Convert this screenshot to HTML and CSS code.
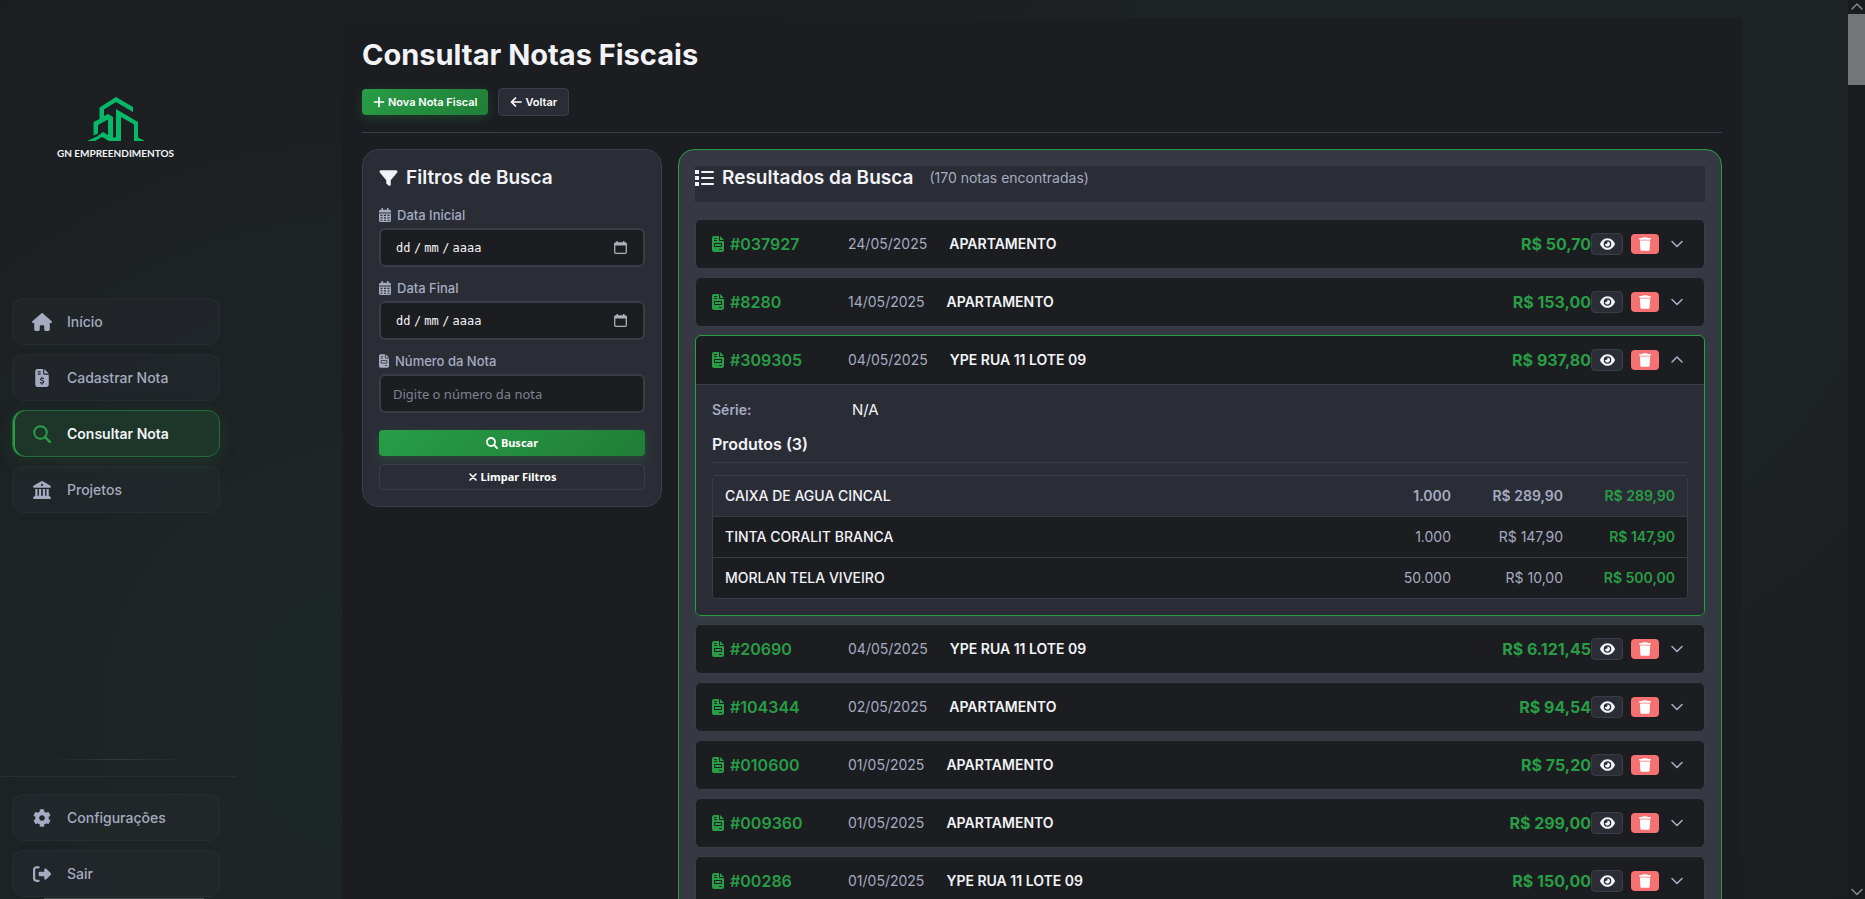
FILE: index.html
```html
<!DOCTYPE html>
<html lang="pt-BR">
<head>
<meta charset="utf-8">
<title>Consultar Notas Fiscais</title>
<link rel="stylesheet" href="styles.css">
</head>
<body>
<svg class="sprite" aria-hidden="true">
  <symbol id="house" viewBox="0 0 576 512"><path d="M575.8 255.5c0 18-15 32.1-32 32.1h-32l.7 160.2c0 2.7-.2 5.4-.5 8.1V472c0 22.1-17.9 40-40 40H456c-1.1 0-2.2 0-3.3-.1c-1.4 .1-2.8 .1-4.2 .1H416 392c-22.1 0-40-17.9-40-40V448 384c0-17.7-14.3-32-32-32H256c-17.7 0-32 14.3-32 32v64 24c0 22.1-17.9 40-40 40H160 128.1c-1.5 0-3-.1-4.5-.2c-1.2 .1-2.4 .2-3.6 .2H104c-22.1 0-40-17.9-40-40V360c0-.9 0-1.9 .1-2.8V287.6H32c-18 0-32-14-32-32.1c0-9 3-17 10-24L266.4 8c7-7 15-8 22-8s15 2 21 7L564.8 231.5c8 7 12 15 11 24z"/></symbol>
  <symbol id="file-dollar" viewBox="0 0 384 512"><path fill-rule="evenodd" d="M64 0C28.700 0 0 28.700 0 64V448c0 35.300 28.700 64 64 64H320c35.300 0 64-28.700 64-64V160H256c-17.700 0-32-14.300-32-32V0H64zM256 0V128H384L256 0zM80 64h64c8.800 0 16 7.200 16 16s-7.200 16-16 16H80c-8.800 0-16-7.200-16-16s7.200-16 16-16zm0 64h64c8.800 0 16 7.200 16 16s-7.200 16-16 16H80c-8.800 0-16-7.200-16-16s7.200-16 16-16z"/><path d="M238 274c-14-9-88-24-88 20 0 46 92 22 92 70 0 46-74 36-98 20M192 232v32M192 398v34" fill="none" stroke="#1e2327" stroke-width="32" stroke-linecap="round"/></symbol>
  <symbol id="lens" viewBox="0 0 18 18"><circle cx="7.500" cy="7.500" r="6.300" fill="none" stroke="currentColor" stroke-width="2"/><path d="M12 12l4.800 4.800" stroke="currentColor" stroke-width="2.400" stroke-linecap="round"/></symbol>
  <symbol id="landmark" viewBox="0 0 512 512"><path fill-rule="evenodd" d="M240.100 4.200c9.800-5.600 21.900-5.600 31.800 0l171.800 98.100L448 104l0 .9 47.900 27.400c12.600 7.200 18.800 22 15.100 36s-16.400 23.800-30.900 23.800H32c-14.500 0-27.200-9.800-30.900-23.800s2.500-28.800 15.100-36L64 104.900V104l4.400-1.600L240.100 4.200zM256 80a32 32 0 1 0 0 64 32 32 0 1 0 0-64zM64 224h64V416h40V224h64V416h48V224h64V416h40V224h64V420c.6 .3 1.200 .7 1.800 1.100l48 32c11.700 7.800 17 22.400 12.900 35.900S494.100 512 480 512H32c-14.100 0-26.500-9.200-30.600-22.700s1.100-28.100 12.900-35.900l48-32c.6-.4 1.200-.7 1.700-1.100V224z"/></symbol>
  <symbol id="gear" viewBox="0 0 512 512"><path d="M487.4 315.7l-42.6-24.6c4.3-23.2 4.3-47 0-70.2l42.6-24.6c4.9-2.8 7.1-8.6 5.5-14-11.1-35.6-30-67.8-54.7-94.6-3.8-4.1-10-5.1-14.8-2.3L380.8 110c-17.9-15.4-38.5-27.3-60.8-35.1V25.8c0-5.6-3.9-10.5-9.4-11.7-36.7-8.2-74.3-7.8-109.2 0-5.5 1.2-9.4 6.1-9.4 11.7V75c-22.2 7.9-42.8 19.8-60.8 35.1L88.7 85.5c-4.9-2.8-11-1.9-14.8 2.3-24.7 26.7-43.6 58.9-54.7 94.6-1.7 5.4.6 11.2 5.5 14L67.3 221c-4.3 23.2-4.3 47 0 70.2l-42.6 24.6c-4.9 2.8-7.1 8.6-5.5 14 11.1 35.6 30 67.8 54.7 94.6 3.8 4.1 10 5.1 14.8 2.3l42.6-24.6c17.9 15.4 38.5 27.3 60.8 35.1v49.2c0 5.6 3.9 10.5 9.4 11.7 36.7 8.2 74.3 7.8 109.2 0 5.5-1.2 9.4-6.1 9.4-11.7v-49.2c22.2-7.9 42.8-19.8 60.8-35.1l42.6 24.6c4.9 2.8 11 1.900 14.8-2.3 24.7-26.700 43.6-58.9 54.7-94.6 1.5-5.5-.7-11.3-5.6-14.1zM256 336c-44.1 0-80-35.9-80-80s35.9-80 80-80 80 35.9 80 80-35.9 80-80 80z"/></symbol>
  <symbol id="exit" viewBox="0 0 512 512"><path d="M377.900 105.900L500.700 228.700c7.200 7.200 11.300 17.100 11.300 27.300s-4.100 20.100-11.300 27.300L377.900 406.100c-6.400 6.400-15 9.900-24 9.900c-18.700 0-33.900-15.200-33.900-33.900l0-62.100-128 0c-17.700 0-32-14.300-32-32l0-64c0-17.700 14.300-32 32-32l128 0 0-62.100c0-18.700 15.200-33.900 33.900-33.900c9 0 17.600 3.600 24 9.900zM160 96L96 96c-17.700 0-32 14.300-32 32l0 256c0 17.700 14.300 32 32 32l64 0c17.700 0 32 14.300 32 32s-14.300 32-32 32l-64 0c-53 0-96-43-96-96L0 128C0 75 43 32 96 32l64 0c17.700 0 32 14.300 32 32s-14.300 32-32 32z"/></symbol>
  <symbol id="plus" viewBox="0 0 12 12"><path d="M6 1.500v9M1.500 6h9" stroke="currentColor" stroke-width="1.700" stroke-linecap="round"/></symbol>
  <symbol id="arrow" viewBox="0 0 12 12"><path d="M5.500 2L1.500 6l4 4M1.500 6h9.500" fill="none" stroke="currentColor" stroke-width="1.700" stroke-linecap="round" stroke-linejoin="round"/></symbol>
  <symbol id="cross" viewBox="0 0 10 10"><path d="M2 2l6 6M8 2l-6 6" stroke="currentColor" stroke-width="1.600" stroke-linecap="round"/></symbol>
  <symbol id="search" viewBox="0 0 12 12"><circle cx="5" cy="5" r="4" fill="none" stroke="currentColor" stroke-width="1.800"/><path d="M8 8l3.100 3.100" stroke="currentColor" stroke-width="2" stroke-linecap="round"/></symbol>
  <symbol id="funnel" viewBox="0 0 512 512"><path d="M3.9 54.9C10.5 40.9 24.5 32 40 32H472c15.5 0 29.5 8.900 36.1 22.9s4.6 30.5-5.2 42.5L320 320.9V448c0 12.1-6.8 23.2-17.7 28.6s-23.8 4.3-33.5-3l-64-48c-8.1-6-12.8-15.5-12.8-25.6V320.9L9 97.3C-.7 85.4-2.8 68.8 3.9 54.9z"/></symbol>
  <symbol id="list" viewBox="0 0 19 16"><path d="M0 0h4v4H0zM0 6h4v4H0zM0 12h4v4H0z"/><path d="M7 2h11M7 8h11M7 14h11" stroke="currentColor" stroke-width="2" stroke-linecap="round"/></symbol>
  <symbol id="calendar" viewBox="0 0 12 14"><path fill-rule="evenodd" d="M2.500 0h1.500v1.700h4V0h1.500v1.700h1A1.500 1.500 0 0 1 12 3.200V4.500H0V3.200A1.500 1.500 0 0 1 1.500 1.700h1zM0 5.400h12v7.100A1.500 1.500 0 0 1 10.500 14h-9A1.500 1.500 0 0 1 0 12.500zM1.500 6.700v1.300h2V6.700zm3.500 0v1.300h2V6.700zm3.500 0v1.300h2V6.700zM1.500 9.200v1.300h2V9.200zm3.500 0v1.300h2V9.200zm3.500 0v1.300h2V9.200zM1.500 11.700v1h2v-1zm3.500 0v1h2v-1zm3.500 0v1h2v-1z"/></symbol>
  <symbol id="picker" viewBox="0 0 13 13"><path fill="none" stroke="currentColor" stroke-width="1.300" d="M1.700 2h9.600q1 0 1 1v8.300q0 1-1 1H1.700q-1 0-1-1V3q0-1 1-1z"/><path d="M.7 2h11.600v2.500H.7zM2.500 0H4v2H2.500zM9 0h1.500v2H9z"/></symbol>
  <symbol id="invoice" viewBox="0 0 384 512"><path fill-rule="evenodd" d="M64 0C28.700 0 0 28.700 0 64V448c0 35.300 28.700 64 64 64H320c35.300 0 64-28.700 64-64V160H256c-17.700 0-32-14.300-32-32V0H64zM256 0V128H384L256 0zM80 64h64c8.800 0 16 7.200 16 16s-7.200 16-16 16H80c-8.800 0-16-7.200-16-16s7.200-16 16-16zm0 64h64c8.800 0 16 7.200 16 16s-7.200 16-16 16H80c-8.800 0-16-7.200-16-16s7.200-16 16-16zm16 96H288c17.700 0 32 14.300 32 32v64c0 17.700-14.300 32-32 32H96c-17.700 0-32-14.300-32-32V256c0-17.700 14.300-32 32-32zm0 32v64H288V256H96zM240 416h64c8.800 0 16 7.200 16 16s-7.200 16-16 16H240c-8.800 0-16-7.200-16-16s7.200-16 16-16z"/></symbol>
  <symbol id="eye" viewBox="0 0 576 512"><path d="M288 32c-80.800 0-145.500 36.800-192.600 80.600C48.600 156 17.300 208 2.500 243.700c-3.300 7.900-3.300 16.700 0 24.600C17.300 304 48.600 356 95.400 399.400C142.500 443.200 207.200 480 288 480s145.500-36.800 192.600-80.600c46.800-43.500 78.100-95.400 93-131.100c3.300-7.900 3.300-16.700 0-24.600c-14.900-35.700-46.200-87.700-93-131.100C433.500 68.800 368.800 32 288 32zM144 256a144 144 0 1 1 288 0 144 144 0 1 1 -288 0zm144-64c0 35.300-28.700 64-64 64c-7.100 0-13.900-1.200-20.300-3.300c-5.500-1.800-11.900 1.600-11.700 7.400c.3 6.900 1.300 13.800 3.200 20.700c13.700 51.200 66.400 81.600 117.600 67.900s81.600-66.400 67.900-117.600c-11.100-41.500-47.800-69.400-88.600-71.100c-5.800-.2-9.200 6.100-7.400 11.700c2.100 6.400 3.300 13.200 3.300 20.300z"/></symbol>
  <symbol id="trash" viewBox="0 0 448 512"><path d="M135.200 17.700L128 32H32C14.300 32 0 46.300 0 64S14.300 96 32 96H416c17.700 0 32-14.300 32-32s-14.300-32-32-32H320l-7.200-14.300C307.400 6.800 296.300 0 284.200 0H163.800c-12.100 0-23.200 6.800-28.600 17.700zM416 128H32L53.200 467c1.600 25.300 22.600 45 47.900 45H346.900c25.300 0 46.300-19.700 47.900-45L416 128z"/></symbol>
  <symbol id="down" viewBox="0 0 14 14"><path d="M2 4.500l5 5 5-5" fill="none" stroke="currentColor" stroke-width="1.600" stroke-linecap="round" stroke-linejoin="round"/></symbol>
  <symbol id="up" viewBox="0 0 14 14"><path d="M2 9l5-5 5 5" fill="none" stroke="currentColor" stroke-width="1.600" stroke-linecap="round" stroke-linejoin="round"/></symbol>
</svg>

<div class="app">
  <aside class="sidebar">
    <div class="brand">
      <svg class="brand-mark" viewBox="0 0 58 44" aria-hidden="true"><path d="M12.500 22V10.500L29 0l17 10v5L29 5 17 12.500V19l4-2 5 3v20.500h3V12l22 13v15.500l7 3.500H47V27.500L34 20v24H22l-7-4-7 4H0l10-4.500 6-4.500 5 3V22.500L11 28v8.500l-4.500 2V25z"/></svg>
      <span class="brand-name">GN EMPREENDIMENTOS</span>
    </div>
    <nav class="menu">
      <a class="item" href="#"><svg class="item-icon"><use href="#house"/></svg>Início</a>
      <a class="item" href="#"><svg class="item-icon"><use href="#file-dollar"/></svg>Cadastrar Nota</a>
      <a class="item active" href="#"><svg class="item-icon"><use href="#lens"/></svg>Consultar Nota</a>
      <a class="item" href="#"><svg class="item-icon"><use href="#landmark"/></svg>Projetos</a>
    </nav>
    <div class="fade-line"></div>
    <nav class="menu bottom">
      <a class="item" href="#"><svg class="item-icon"><use href="#gear"/></svg>Configurações</a>
      <a class="item" href="#"><svg class="item-icon"><use href="#exit"/></svg>Sair</a>
    </nav>
    <div class="h-thumb"></div>
  </aside>

  <div class="stage">
    <main class="panel">
      <header class="page-head">
        <h1>Consultar Notas Fiscais</h1>
        <div class="head-actions">
          <button class="btn primary" type="button"><svg class="i12"><use href="#plus"/></svg>Nova Nota Fiscal</button>
          <button class="btn outline" type="button"><svg class="i12"><use href="#arrow"/></svg>Voltar</button>
        </div>
      </header>

      <div class="columns">
        <form class="filters">
          <h2><svg class="title-icon"><use href="#funnel"/></svg>Filtros de Busca</h2>
          <div class="field">
            <label for="d1"><svg class="label-icon"><use href="#calendar"/></svg>Data Inicial</label>
            <div class="control date"><input class="part" id="d1" placeholder="dd">/<input class="part" aria-label="Mês inicial" placeholder="mm">/<input class="part year" aria-label="Ano inicial" placeholder="aaaa"><button class="pick" type="button" aria-label="Abrir calendário"><svg class="i13"><use href="#picker"/></svg></button></div>
          </div>
          <div class="field">
            <label for="d2"><svg class="label-icon"><use href="#calendar"/></svg>Data Final</label>
            <div class="control date"><input class="part" id="d2" placeholder="dd">/<input class="part" aria-label="Mês final" placeholder="mm">/<input class="part year" aria-label="Ano final" placeholder="aaaa"><button class="pick" type="button" aria-label="Abrir calendário"><svg class="i13"><use href="#picker"/></svg></button></div>
          </div>
          <div class="field">
            <label for="num"><svg class="label-icon slim"><use href="#invoice"/></svg>Número da Nota</label>
            <input class="control" id="num" type="text" placeholder="Digite o número da nota">
          </div>
          <div class="form-actions">
            <button class="btn primary" type="button"><svg class="i12"><use href="#search"/></svg>Buscar</button>
            <button class="btn outline" type="button"><svg class="i10"><use href="#cross"/></svg>Limpar Filtros</button>
          </div>
        </form>

        <section class="results">
          <div class="results-head">
            <h2><svg class="title-icon"><use href="#list"/></svg>Resultados da Busca</h2>
            <span class="count">(170 notas encontradas)</span>
          </div>
          <div class="notes">
            <article class="note"><div class="note-row"><span class="num"><svg class="note-icon"><use href="#invoice"/></svg>#037927</span><span class="day">24/05/2025</span><span class="place">APARTAMENTO</span><span class="total">R$ 50,70</span><button class="view" aria-label="Ver"><svg class="eye"><use href="#eye"/></svg></button><button class="del" aria-label="Excluir"><svg class="trash"><use href="#trash"/></svg></button><button class="toggle" aria-label="Expandir"><svg class="i14"><use href="#down"/></svg></button></div></article>
            <article class="note"><div class="note-row"><span class="num"><svg class="note-icon"><use href="#invoice"/></svg>#8280</span><span class="day">14/05/2025</span><span class="place">APARTAMENTO</span><span class="total">R$ 153,00</span><button class="view" aria-label="Ver"><svg class="eye"><use href="#eye"/></svg></button><button class="del" aria-label="Excluir"><svg class="trash"><use href="#trash"/></svg></button><button class="toggle" aria-label="Expandir"><svg class="i14"><use href="#down"/></svg></button></div></article>
            <article class="note open"><div class="note-row"><span class="num"><svg class="note-icon"><use href="#invoice"/></svg>#309305</span><span class="day">04/05/2025</span><span class="place">YPE RUA 11 LOTE 09</span><span class="total">R$ 937,80</span><button class="view" aria-label="Ver"><svg class="eye"><use href="#eye"/></svg></button><button class="del" aria-label="Excluir"><svg class="trash"><use href="#trash"/></svg></button><button class="toggle" aria-label="Recolher"><svg class="i14"><use href="#up"/></svg></button></div>
              <div class="detail">
                <div class="series"><span class="series-label">Série:</span><span>N/A</span></div>
                <h3>Produtos (3)</h3>
                <div class="table-box">
                  <table>
                    <tbody>
                      <tr class="first"><td>CAIXA DE AGUA CINCAL</td><td class="n qty">1.000</td><td class="n unit">R$ 289,90</td><td class="n sum">R$ 289,90</td></tr>
                      <tr><td>TINTA CORALIT BRANCA</td><td class="n qty">1.000</td><td class="n unit">R$ 147,90</td><td class="n sum">R$ 147,90</td></tr>
                      <tr><td>MORLAN TELA VIVEIRO</td><td class="n qty">50.000</td><td class="n unit">R$ 10,00</td><td class="n sum">R$ 500,00</td></tr>
                    </tbody>
                  </table>
                </div>
              </div>
            </article>
            <article class="note"><div class="note-row"><span class="num"><svg class="note-icon"><use href="#invoice"/></svg>#20690</span><span class="day">04/05/2025</span><span class="place">YPE RUA 11 LOTE 09</span><span class="total">R$ 6.121,45</span><button class="view" aria-label="Ver"><svg class="eye"><use href="#eye"/></svg></button><button class="del" aria-label="Excluir"><svg class="trash"><use href="#trash"/></svg></button><button class="toggle" aria-label="Expandir"><svg class="i14"><use href="#down"/></svg></button></div></article>
            <article class="note"><div class="note-row"><span class="num"><svg class="note-icon"><use href="#invoice"/></svg>#104344</span><span class="day">02/05/2025</span><span class="place">APARTAMENTO</span><span class="total">R$ 94,54</span><button class="view" aria-label="Ver"><svg class="eye"><use href="#eye"/></svg></button><button class="del" aria-label="Excluir"><svg class="trash"><use href="#trash"/></svg></button><button class="toggle" aria-label="Expandir"><svg class="i14"><use href="#down"/></svg></button></div></article>
            <article class="note"><div class="note-row"><span class="num"><svg class="note-icon"><use href="#invoice"/></svg>#010600</span><span class="day">01/05/2025</span><span class="place">APARTAMENTO</span><span class="total">R$ 75,20</span><button class="view" aria-label="Ver"><svg class="eye"><use href="#eye"/></svg></button><button class="del" aria-label="Excluir"><svg class="trash"><use href="#trash"/></svg></button><button class="toggle" aria-label="Expandir"><svg class="i14"><use href="#down"/></svg></button></div></article>
            <article class="note"><div class="note-row"><span class="num"><svg class="note-icon"><use href="#invoice"/></svg>#009360</span><span class="day">01/05/2025</span><span class="place">APARTAMENTO</span><span class="total">R$ 299,00</span><button class="view" aria-label="Ver"><svg class="eye"><use href="#eye"/></svg></button><button class="del" aria-label="Excluir"><svg class="trash"><use href="#trash"/></svg></button><button class="toggle" aria-label="Expandir"><svg class="i14"><use href="#down"/></svg></button></div></article>
            <article class="note"><div class="note-row"><span class="num"><svg class="note-icon"><use href="#invoice"/></svg>#00286</span><span class="day">01/05/2025</span><span class="place">YPE RUA 11 LOTE 09</span><span class="total">R$ 150,00</span><button class="view" aria-label="Ver"><svg class="eye"><use href="#eye"/></svg></button><button class="del" aria-label="Excluir"><svg class="trash"><use href="#trash"/></svg></button><button class="toggle" aria-label="Expandir"><svg class="i14"><use href="#down"/></svg></button></div></article>
          </div>
        </section>
      </div>
    </main>
  </div>

  <div class="scrollbar" aria-hidden="true">
    <svg class="i14"><use href="#up"/></svg>
    <div class="thumb"></div>
    <svg class="i14 last"><use href="#down"/></svg>
  </div>
</div>
</body>
</html>
```
FILE: styles.css
```css
:root {
  --bg: #1c1d21;
  --card: #2b2d36;
  --raised: #363843;
  --line: #3a3c47;
  --green: #289d46;
  --green-dark: #207e38;
  --text: #f2f3f7;
  --muted: #a5abc0;
}

* { box-sizing: border-box; }

body {
  margin: 0;
  height: 100vh;
  overflow: hidden;
  color: var(--text);
  font-family: Inter, "Liberation Sans", sans-serif;
  font-size: 14px;
  line-height: 20px;
  background:
    radial-gradient(circle at 20% 80%, rgba(40, 167, 100, 0.08), transparent 50%),
    radial-gradient(circle at 80% 20%, rgba(40, 167, 100, 0.06), transparent 50%),
    var(--bg);
}

h1, h2, h3 { margin: 0; font-weight: 600; }
svg { display: block; flex: none; fill: currentColor; }
button { font: inherit; color: inherit; cursor: pointer; padding: 0; border: 0; background: none; }
a { color: inherit; text-decoration: none; }
.sprite { position: absolute; width: 0; height: 0; }
.i10 { width: 10px; height: 10px; }
.i12 { width: 12px; height: 12px; }
.i13 { width: 13px; height: 13px; }
.i14 { width: 14px; height: 14px; }

.app { display: grid; grid-template-columns: 236px 1fr 17px; height: 100vh; }

.sidebar { display: flex; flex-direction: column; height: 100vh; }
.brand { display: flex; flex-direction: column; align-items: center; gap: 4px; padding: 97px 5px 0 0; margin-bottom: 137px; }
.brand-mark { width: 58px; height: 44px; color: #06b968; }
.brand-name { font: 700 10px/16px Lato, "Open Sans", sans-serif; }
.menu { display: flex; flex-direction: column; gap: 9px; padding: 0 16px 0 12px; }
.menu.bottom { margin-top: 16px; padding-top: 17px; border-top: 1px solid #2a2f34; }
.fade-line { height: 1px; margin: auto 48px 0; background: linear-gradient(90deg, transparent, #343a3e, transparent); }
.h-thumb { width: 160px; height: 1px; margin: 1px 0 0 44px; background: #4d5352; }
.item {
  display: flex; align-items: center; gap: 15px; height: 47px; padding: 0 19px;
  border: 1px solid rgba(255, 255, 255, 0.03); border-radius: 12px;
  background: rgba(43, 45, 54, 0.3); color: var(--muted); font-weight: 500;
}
.item-icon { width: 20px; height: 18px; }
.item.active {
  color: var(--text); font-weight: 600;
  background: rgba(40, 157, 70, 0.16);
  border-color: #236b39;
  box-shadow: inset 2px 0 0 var(--green), 0 4px 20px rgba(40, 157, 70, 0.15);
}
.item.active .item-icon { color: var(--green); }

.stage { display: flex; justify-content: center; padding-top: 18px; min-width: 0; height: 100vh; overflow: hidden; }
.panel { width: 100%; max-width: 1400px; padding: 20px; background: var(--bg); }
.page-head { padding-bottom: 16px; border-bottom: 1px solid var(--line); }
h1 { font-size: 29px; line-height: 34px; font-weight: 700; }
.head-actions { display: flex; align-items: center; gap: 10px; margin-top: 16px; }
.btn {
  display: flex; align-items: center; justify-content: center; gap: 3px;
  height: 26px; padding: 0 11px; border-radius: 4px; font-size: 11px; line-height: 16px; font-weight: 600; color: #fff;
}
.primary { background: linear-gradient(135deg, var(--green), var(--green-dark)); box-shadow: 0 4px 12px rgba(40, 157, 70, 0.25); }
.outline { height: 28px; background: var(--card); border: 1px solid var(--line); }

.columns { display: grid; grid-template-columns: 300px 1fr; align-items: start; gap: 16px; margin-top: 16px; }
h2 { display: flex; align-items: center; gap: 8px; font-size: 19px; line-height: 24px; }
.title-icon { width: 19px; height: 18px; }

.filters { padding: 16px; border: 1px solid var(--line); border-radius: 16px; background: var(--card); }
.field { margin-top: 12px; }
h2 + .field { margin-top: 16px; }
label { display: flex; align-items: center; gap: 6px; margin-bottom: 4px; font-size: 13px; line-height: 18px; font-weight: 500; color: var(--muted); }
.label-icon { width: 12px; height: 14px; }
.label-icon.slim { width: 10px; }
.control {
  display: flex; align-items: center; width: 100%; height: 39px; padding: 0 12px;
  border: 2px solid var(--line); border-radius: 6px; background: var(--bg);
  color: var(--text); font: 13px/18px "Noto Sans", sans-serif;
}
.control::placeholder { color: #7d8292; opacity: 1; }
.date { gap: 3px; padding: 0 16px 0 15px; font: 12px/18px "DejaVu Sans Mono", monospace; }
.part { width: 15px; padding: 0; border: 0; background: none; color: inherit; font: inherit; }
.part::placeholder { color: var(--text); opacity: 1; }
.part.year { width: 30px; }
.pick { margin-left: auto; color: #aeb0b5; }
.form-actions { display: flex; flex-direction: column; gap: 8px; margin-top: 17px; }
.form-actions .btn { height: 26px; font-family: "Noto Sans", sans-serif; font-weight: 700; }

.results { min-width: 0; padding: 16px; border: 1px solid var(--green); border-radius: 16px; background: var(--raised); height: 1200px; }
.results-head { display: flex; align-items: flex-start; gap: 16px; padding-bottom: 12px; border-bottom: 1px solid var(--line); background: var(--card); }
.count { font-size: 14px; line-height: 24px; color: var(--muted); }
.notes { display: flex; flex-direction: column; gap: 8px; margin-top: 16px; }
.note { border: 1px solid var(--line); border-radius: 6px; background: var(--bg); }
.note.open { border-color: var(--green); box-shadow: 0 4px 12px rgba(40, 157, 70, 0.1); }
.note-row { display: flex; align-items: center; height: 48px; padding: 0 16px; }
.num { display: flex; align-items: center; gap: 6px; width: 136px; font-size: 16px; font-weight: 600; color: var(--green); }
.note-icon { width: 12px; height: 16px; }
.day { margin-right: 22px; color: var(--muted); }
.place { flex: 1; font-weight: 600; }
.total { font-size: 16px; font-weight: 700; color: var(--green); }
.view, .del { display: flex; align-items: center; justify-content: center; border-radius: 4px; }
.view { width: 32px; height: 22px; border: 1px solid var(--line); background: var(--card); }
.del { width: 28px; height: 20px; margin-left: 8px; background: #f57172; color: #fff; }
.eye { width: 15px; height: 14px; }
.trash { width: 12px; height: 14px; }
.toggle { margin: 0 4px 0 11px; color: var(--muted); }

.detail { padding: 15px 16px 16px; border-top: 1px solid var(--line); border-radius: 0 0 5px 5px; background: var(--card); }
.series { display: flex; font-size: 15px; }
.series-label { width: 140px; font-size: 14px; font-weight: 600; color: var(--muted); }
h3 { margin-top: 13px; padding-bottom: 7px; font-size: 16px; line-height: 22px; border-bottom: 1px solid var(--line); }
.table-box { margin-top: 12px; border: 1px solid var(--line); border-radius: 4px; overflow: hidden; }
table { width: 100%; border-collapse: separate; border-spacing: 0; font-size: 14px; }
td { height: 41px; padding: 0 12px; font-weight: 500; border-top: 1px solid var(--line); background: var(--bg); }
.first td { height: 40px; background: var(--card); border-top: 0; font-weight: 500; }
.n { width: 112px; text-align: right; }
.qty, .unit { color: var(--muted); font-weight: 400; }
.first .n, .sum { font-weight: 600; }
.sum { color: var(--green); }

.scrollbar { display: flex; flex-direction: column; align-items: center; background: #191b1e; color: #85868a; }
.thumb { width: 100%; height: 71px; background: #747577; }
.last { margin-top: auto; }
```
